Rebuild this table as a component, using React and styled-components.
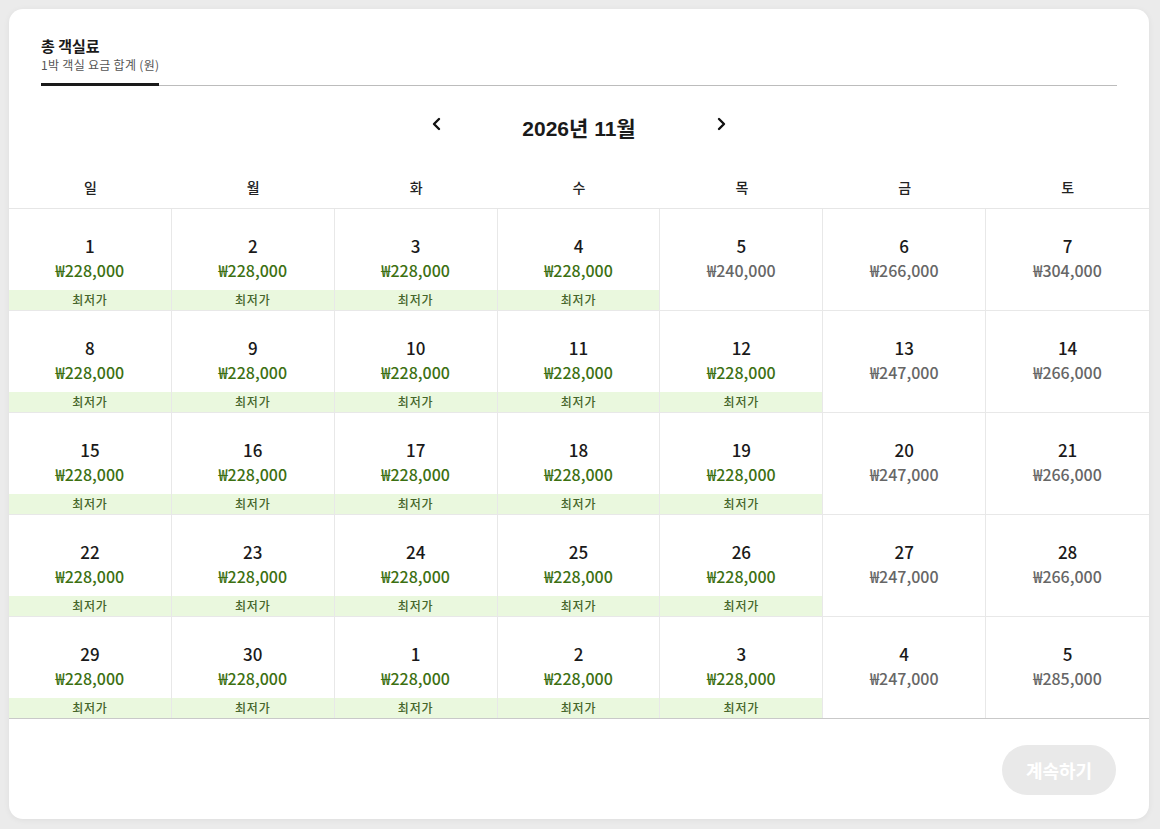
import React from "react";
import styled, { createGlobalStyle } from "styled-components";

const Global = createGlobalStyle`
  html, body { margin: 0; padding: 0; background: #ebebeb; }
  body { font-family: "Noto Sans CJK KR", "Noto Sans", sans-serif; color: #1a1a1a; }
  * { box-sizing: border-box; }
`;

const Page = styled.div`
  padding: 9px 11px 10px 9px;
`;

const Card = styled.div`
  width: 1140px;
  background: #fff;
  border-radius: 14px;
  box-shadow: 0 1px 6px rgba(0, 0, 0, 0.06);
  overflow: hidden;
  display: flex;
  flex-direction: column;
`;

const TabBar = styled.div`
  margin: 0 32px;
  padding-top: 27px;
  border-bottom: 1px solid #bcbcbc;
  display: flex;
`;

const Tab = styled.div`
  display: flex;
  flex-direction: column;
  padding-bottom: 10px;
  border-bottom: 3px solid ${(p) => (p.$active ? "#1a1a1a" : "transparent")};
  margin-bottom: -1px;
`;

const TabTitle = styled.div`
  font-size: 15px;
  line-height: 20px;
  font-weight: 700;
  color: #1a1a1a;
`;

const TabSub = styled.div`
  font-size: 12px;
  line-height: 17px;
  letter-spacing: 0.3px;
  color: #555;
`;

const MonthNav = styled.div`
  margin-top: 19px;
  height: 44px;
  display: flex;
  align-items: center;
  justify-content: center;
  gap: 30px;
`;

const NavButton = styled.button`
  width: 24px;
  height: 24px;
  padding: 0;
  border: none;
  background: none;
  display: flex;
  align-items: center;
  justify-content: center;
  color: #111;
  margin-top: -7px;
  cursor: pointer;
`;

const MonthTitle = styled.div`
  width: 200px;
  text-align: center;
  font-family: "Liberation Sans", "Noto Sans CJK KR", sans-serif;
  font-size: 21px;
  font-weight: 700;
  color: #1a1a1a;
`;

const WeekRow = styled.div`
  margin-top: 16px;
  display: grid;
  grid-template-columns: repeat(7, 1fr);
  border-bottom: 1px solid #e6e6e6;
`;

const WeekDay = styled.div`
  height: 43px;
  display: flex;
  align-items: center;
  justify-content: center;
  font-size: 14px;
  font-weight: 500;
  color: #222;
`;

const Grid = styled.div`
  display: grid;
  grid-template-columns: repeat(7, 1fr);
  border-bottom: 1px solid #c9c9c9;
`;

const Cell = styled.div`
  height: ${(p) => (p.$lastRow ? "101px" : "102px")};
  display: flex;
  flex-direction: column;
  align-items: center;
  padding-top: 25px;
  border-right: ${(p) => (p.$lastCol ? "none" : "1px solid #e8e8e8")};
  border-bottom: ${(p) => (p.$lastRow ? "none" : "1px solid #e8e8e8")};
`;

const DayNum = styled.div`
  font-size: 17px;
  line-height: 24px;
  font-weight: 500;
  color: #1a1a1a;
`;

const Price = styled.div`
  font-size: 16px;
  line-height: 24px;
  font-weight: 500;
  color: ${(p) => (p.$best ? "#3c7012" : "#666")};
`;

const Badge = styled.div`
  margin-top: auto;
  align-self: stretch;
  height: 20px;
  background: #eaf8de;
  color: #45652a;
  font-size: 12px;
  font-weight: 500;
  line-height: 20px;
  text-align: center;
  letter-spacing: 0.8px;
`;

const Footer = styled.div`
  display: flex;
  justify-content: flex-end;
  padding: 26px 33px 24px;
`;

const ContinueButton = styled.button`
  width: 114px;
  height: 50px;
  border-radius: 25px;
  border: none;
  background: #e9e9e9;
  color: #fff;
  font-family: "Noto Sans CJK KR", sans-serif;
  font-size: 18px;
  font-weight: 700;
`;

const Chevron = ({ dir }) => (
  <svg width="12" height="14" viewBox="0 0 12 14" fill="none">
    <polyline
      points={dir === "left" ? "8,2 3,7 8,12" : "4,2 9,7 4,12"}
      stroke="currentColor"
      strokeWidth="2.4"
      strokeLinecap="round"
      strokeLinejoin="round"
    />
  </svg>
);

const weekdays = ["일", "월", "화", "수", "목", "금", "토"];

const b = (d) => ({ d, p: "228,000", best: true });
const n = (d, p) => ({ d, p, best: false });

const weeks = [
  [b(1), b(2), b(3), b(4), n(5, "240,000"), n(6, "266,000"), n(7, "304,000")],
  [b(8), b(9), b(10), b(11), b(12), n(13, "247,000"), n(14, "266,000")],
  [b(15), b(16), b(17), b(18), b(19), n(20, "247,000"), n(21, "266,000")],
  [b(22), b(23), b(24), b(25), b(26), n(27, "247,000"), n(28, "266,000")],
  [b(29), b(30), b(1), b(2), b(3), n(4, "247,000"), n(5, "285,000")],
];

export default function App() {
  return (
    <>
      <Global />
      <Page>
        <Card>
          <TabBar>
            <Tab $active>
              <TabTitle>총 객실료</TabTitle>
              <TabSub>1박 객실 요금 합계 (원)</TabSub>
            </Tab>
          </TabBar>
          <MonthNav>
            <NavButton aria-label="이전 달">
              <Chevron dir="left" />
            </NavButton>
            <MonthTitle>2026년 11월</MonthTitle>
            <NavButton aria-label="다음 달">
              <Chevron dir="right" />
            </NavButton>
          </MonthNav>
          <WeekRow>
            {weekdays.map((w) => (
              <WeekDay key={w}>{w}</WeekDay>
            ))}
          </WeekRow>
          <Grid>
            {weeks.map((week, wi) =>
              week.map((c, ci) => (
                <Cell
                  key={`${wi}-${ci}`}
                  $lastCol={ci === 6}
                  $lastRow={wi === weeks.length - 1}
                >
                  <DayNum>{c.d}</DayNum>
                  <Price $best={c.best}>₩{c.p}</Price>
                  {c.best && <Badge>최저가</Badge>}
                </Cell>
              ))
            )}
          </Grid>
          <Footer>
            <ContinueButton disabled>계속하기</ContinueButton>
          </Footer>
        </Card>
      </Page>
    </>
  );
}
